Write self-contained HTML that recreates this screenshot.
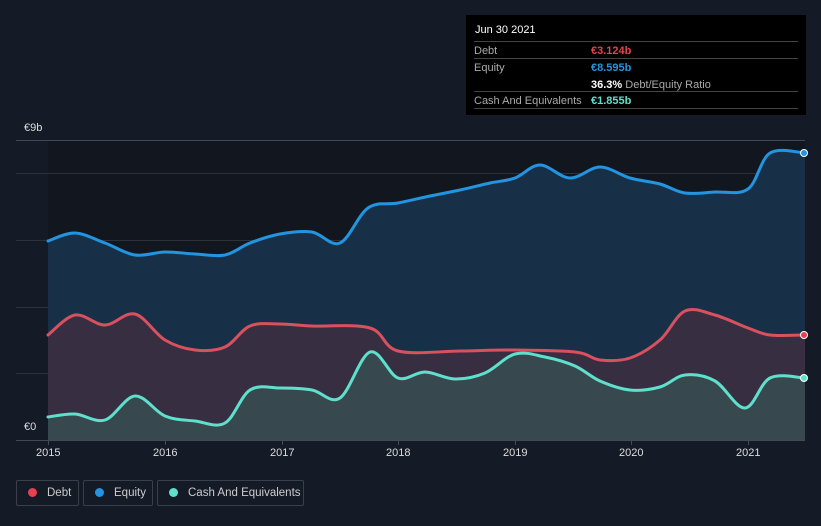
<!DOCTYPE html>
<html><head><meta charset="utf-8"><style>
body{margin:0;width:821px;height:526px;background:#151b26;font-family:"Liberation Sans",sans-serif;overflow:hidden;position:relative}
.tt{position:absolute;left:466px;top:15px;width:340px;height:100px;background:#000;color:#fff;font-size:11px}
.tt .r{position:absolute;left:8px;right:8px;border-top:1px solid #444;height:17px}
.lab{color:#aaa;position:absolute;left:0;top:3px}
.val{position:absolute;left:117px;top:3px;font-weight:bold}
.leg{position:absolute;top:480px;height:26px;border:1px solid #3a404a;border-radius:2px;color:#ccc;font-size:11.5px;line-height:25px;box-sizing:border-box;white-space:nowrap;overflow:hidden}
.leg i{display:inline-block;width:9px;height:9px;border-radius:50%;margin:0 10px 0 11px;vertical-align:-1px}
.ax{position:absolute;color:#ddd;font-size:11px}
</style></head><body>
<svg width="821" height="526" style="position:absolute;left:0;top:0">
<rect x="48" y="140" width="757" height="300" fill="#12171f"/>
<g stroke="#2c323c" stroke-width="1">
<line x1="16" y1="140.5" x2="805" y2="140.5" stroke="#444a55"/>
<line x1="16" y1="173.5" x2="805" y2="173.5"/>
<line x1="16" y1="240.5" x2="805" y2="240.5"/>
<line x1="16" y1="307.5" x2="805" y2="307.5"/>
<line x1="16" y1="373.5" x2="805" y2="373.5"/>
<line x1="16" y1="440.5" x2="805" y2="440.5" stroke="#444a55"/>
</g>
<g stroke="#444a55"><line x1="48.5" y1="440" x2="48.5" y2="445"/><line x1="165.5" y1="440" x2="165.5" y2="445"/><line x1="282.5" y1="440" x2="282.5" y2="445"/><line x1="398.5" y1="440" x2="398.5" y2="445"/><line x1="515.5" y1="440" x2="515.5" y2="445"/><line x1="631.5" y1="440" x2="631.5" y2="445"/><line x1="748.5" y1="440" x2="748.5" y2="445"/></g>
<path id="ef" fill="#173048"/>
<path id="df" fill="#372e42"/>
<path id="cf" fill="#37494f"/>
<g fill="none" stroke-width="3" stroke-linejoin="round" stroke-linecap="round">
<path id="el" stroke="#2394e0"/>
<path id="dl" stroke="#d9505e"/>
<path id="cl" stroke="#5ee0cc"/>
</g>
<circle cx="804" cy="153" r="3.5" fill="#2394e0" stroke="#fff" stroke-width="1"/>
<circle cx="804" cy="335" r="3.5" fill="#e84050" stroke="#fff" stroke-width="1"/>
<circle cx="804" cy="378" r="3.5" fill="#5ee0cc" stroke="#fff" stroke-width="1"/>
</svg>
<script>
function sm(p){var d="M"+p[0][0]+","+p[0][1];for(var i=0;i<p.length-1;i++){var a=p[i-1]||p[i],b=p[i],c=p[i+1],e=p[i+2]||c;var c1x=b[0]+(c[0]-a[0])/6,c1y=b[1]+(c[1]-a[1])/6,c2x=c[0]-(e[0]-b[0])/6,c2y=c[1]-(e[1]-b[1])/6;d+=" C"+c1x+","+c1y+" "+c2x+","+c2y+" "+c[0]+","+c[1];}return d;}
function P(s){return s.trim().split(/\s+/).map(function(t){return t.split(",").map(Number)});}
var E=P("48,241 75,233 105,243 135,255 165,252 195,254 225,255 250,243 280,234 312,232 340,243 368,208 398,203 430,196 460,190 490,183 515,178 540,165 570,178 600,167 630,178 660,184 685,193 715,192 748,189 770,153 805,153");
var D=P("48,335 75,315 105,325 135,314 165,340 195,350 225,347 250,326 280,324 312,326 370,328 398,351 460,351 510,350 575,352 600,360 630,358 660,340 685,311 715,315 748,328 770,335 805,335");
var C=P("48,417 75,414 105,420 135,396 165,416 195,421 225,423 250,390 280,388 312,390 340,398 370,352 398,378 425,372 455,379 485,373 515,354 545,357 575,366 600,381 630,390 660,387 685,375 715,381 745,408 770,378 805,378");
[[E,"e"],[D,"d"],[C,"c"]].forEach(function(x){var s=sm(x[0]);document.getElementById(x[1]+"l").setAttribute("d",s);document.getElementById(x[1]+"f").setAttribute("d",s+" L805,440 L48,440 Z");});
</script>
<div class="ax" style="left:24px;top:122px">€9b</div>
<div class="ax" style="left:24px;top:421px">€0</div>
<div class="ax" style="left:36px;top:447px">2015</div>
<div class="ax" style="left:153px;top:447px">2016</div>
<div class="ax" style="left:270px;top:447px">2017</div>
<div class="ax" style="left:386px;top:447px">2018</div>
<div class="ax" style="left:503px;top:447px">2019</div>
<div class="ax" style="left:619px;top:447px">2020</div>
<div class="ax" style="left:736px;top:447px">2021</div>
<div class="tt">
<div style="position:absolute;left:9px;top:9px">Jun 30 2021</div>
<div class="r" style="top:26px"><span class="lab">Debt</span><span class="val" style="color:#e8414e">€3.124b</span></div>
<div class="r" style="top:43px"><span class="lab">Equity</span><span class="val" style="color:#2394e0">€8.595b</span><span style="position:absolute;left:117px;top:20px"><b>36.3%</b> <span style="color:#aaa">Debt/Equity Ratio</span></span></div>
<div class="r" style="top:76px"><span class="lab">Cash And Equivalents</span><span class="val" style="color:#5ee0cc">€1.855b</span></div>
<div class="r" style="top:93px;height:0"></div>
</div>
<div class="leg" style="left:16px;width:63px"><i style="background:#e84050"></i>Debt</div>
<div class="leg" style="left:83px;width:70px"><i style="background:#2394e0"></i>Equity</div>
<div class="leg" style="left:157px;width:147px"><i style="background:#5ee0cc"></i>Cash And Equivalents</div>
</body></html>
